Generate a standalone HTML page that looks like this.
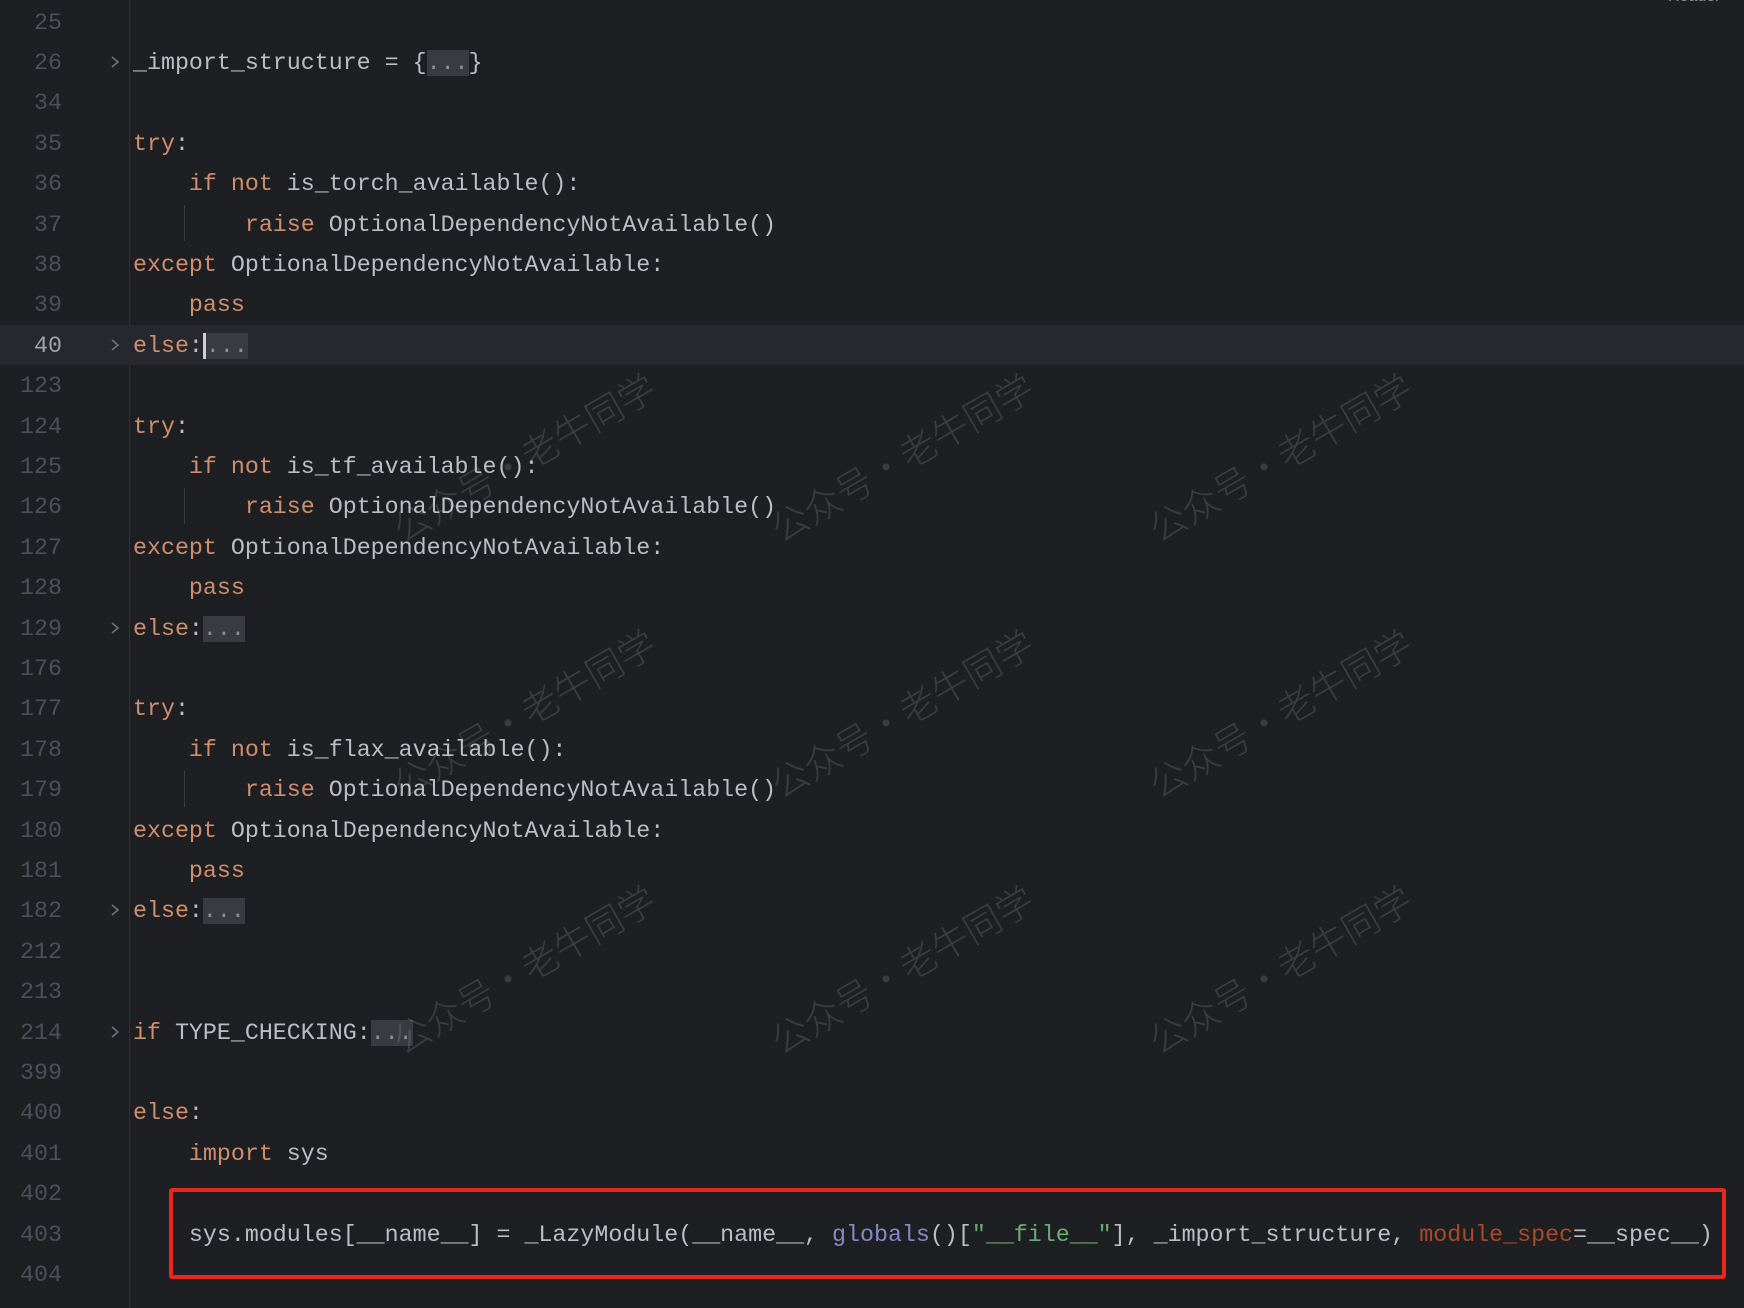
<!DOCTYPE html>
<html><head><meta charset="utf-8"><style>
html,body{margin:0;padding:0;background:#1e1f22;width:1744px;height:1308px;overflow:hidden;position:relative;font-family:"Liberation Mono",monospace;}
.row{position:absolute;left:0;width:1744px;height:40.4px;line-height:40.4px;font-size:23.3px;color:#bcbec4;white-space:pre;}
.num{position:absolute;left:0;width:62px;text-align:right;color:#4b5059;}
.code{position:absolute;left:133px;}
.k{color:#cf8e6d}
.fd{background:#393b40;color:#8c8f96}
.g{color:#8888c6}.s{color:#6aab73}.p{color:#aa4926}
.arrow{position:absolute;left:110px;top:12px;width:10px;height:14px}
.cur{background:#26282e}
.gut{position:absolute;left:129px;top:0;width:1px;height:1308px;background:#2e3034}
.ig{position:absolute;left:184px;width:1px;background:#3a3c41}
.wm{position:absolute;font-family:"Noto Sans CJK SC",sans-serif;font-size:37px;font-weight:300;color:rgba(255,255,255,0.13);transform:translate(-50%,-50%) rotate(-30deg);white-space:nowrap;}
.box{position:absolute;left:169px;top:1188px;width:1557px;height:91px;border:4px solid #e8281f;border-radius:3px;box-sizing:border-box;}
</style></head><body>
<div class="gut"></div>
<div class="row cur" style="top:325px"></div>
<div style="position:absolute;top:2.5px;left:0;">
<div class="row" style="top:0"><span class="num">25</span></div>
<div class="row" style="top:40.4px"><span class="num">26</span><svg class="arrow"><path d="M2 2 L8 7 L2 12" stroke="#6f737a" stroke-width="1.6" fill="none"/></svg><span class="code">_import_structure = {<span class="fd">...</span>}</span></div>
<div class="row" style="top:80.8px"><span class="num">34</span></div>
<div class="row" style="top:121.2px"><span class="num">35</span><span class="code"><span class="k">try</span>:</span></div>
<div class="row" style="top:161.6px"><span class="num">36</span><span class="code">    <span class="k">if not</span> is_torch_available():</span></div>
<div class="row" style="top:202px"><span class="num">37</span><span class="code">        <span class="k">raise</span> OptionalDependencyNotAvailable()</span></div>
<div class="row" style="top:242.4px"><span class="num">38</span><span class="code"><span class="k">except</span> OptionalDependencyNotAvailable:</span></div>
<div class="row" style="top:282.8px"><span class="num">39</span><span class="code">    <span class="k">pass</span></span></div>
<div class="row" style="top:323.2px"><span class="num" style="color:#a1a3ab">40</span><svg class="arrow"><path d="M2 2 L8 7 L2 12" stroke="#6f737a" stroke-width="1.6" fill="none"/></svg><span class="code"><span class="k">else</span>:<span class="fd" style="border-left:3px solid #ced0d6">...</span></span></div>
<div class="row" style="top:363.6px"><span class="num">123</span></div>
<div class="row" style="top:404px"><span class="num">124</span><span class="code"><span class="k">try</span>:</span></div>
<div class="row" style="top:444.4px"><span class="num">125</span><span class="code">    <span class="k">if not</span> is_tf_available():</span></div>
<div class="row" style="top:484.8px"><span class="num">126</span><span class="code">        <span class="k">raise</span> OptionalDependencyNotAvailable()</span></div>
<div class="row" style="top:525.2px"><span class="num">127</span><span class="code"><span class="k">except</span> OptionalDependencyNotAvailable:</span></div>
<div class="row" style="top:565.6px"><span class="num">128</span><span class="code">    <span class="k">pass</span></span></div>
<div class="row" style="top:606px"><span class="num">129</span><svg class="arrow"><path d="M2 2 L8 7 L2 12" stroke="#6f737a" stroke-width="1.6" fill="none"/></svg><span class="code"><span class="k">else</span>:<span class="fd">...</span></span></div>
<div class="row" style="top:646.4px"><span class="num">176</span></div>
<div class="row" style="top:686.8px"><span class="num">177</span><span class="code"><span class="k">try</span>:</span></div>
<div class="row" style="top:727.2px"><span class="num">178</span><span class="code">    <span class="k">if not</span> is_flax_available():</span></div>
<div class="row" style="top:767.6px"><span class="num">179</span><span class="code">        <span class="k">raise</span> OptionalDependencyNotAvailable()</span></div>
<div class="row" style="top:808px"><span class="num">180</span><span class="code"><span class="k">except</span> OptionalDependencyNotAvailable:</span></div>
<div class="row" style="top:848.4px"><span class="num">181</span><span class="code">    <span class="k">pass</span></span></div>
<div class="row" style="top:888.8px"><span class="num">182</span><svg class="arrow"><path d="M2 2 L8 7 L2 12" stroke="#6f737a" stroke-width="1.6" fill="none"/></svg><span class="code"><span class="k">else</span>:<span class="fd">...</span></span></div>
<div class="row" style="top:929.2px"><span class="num">212</span></div>
<div class="row" style="top:969.6px"><span class="num">213</span></div>
<div class="row" style="top:1010px"><span class="num">214</span><svg class="arrow"><path d="M2 2 L8 7 L2 12" stroke="#6f737a" stroke-width="1.6" fill="none"/></svg><span class="code"><span class="k">if</span> TYPE_CHECKING:<span class="fd">...</span></span></div>
<div class="row" style="top:1050.4px"><span class="num">399</span></div>
<div class="row" style="top:1090.8px"><span class="num">400</span><span class="code"><span class="k">else</span>:</span></div>
<div class="row" style="top:1131.2px"><span class="num">401</span><span class="code">    <span class="k">import</span> sys</span></div>
<div class="row" style="top:1171.6px"><span class="num">402</span></div>
<div class="row" style="top:1212px"><span class="num">403</span><span class="code">    sys.modules[__name__] = _LazyModule(__name__, <span class="g">globals</span>()[<span class="s">"__file__"</span>], _import_structure, <span class="p">module_spec</span>=__spec__)</span></div>
<div class="row" style="top:1252.4px"><span class="num">404</span></div>
</div>
<div class="ig" style="top:205px;height:36px"></div>
<div class="ig" style="top:488px;height:36px"></div>
<div class="ig" style="top:771px;height:36px"></div>
<div class="box"></div>
<div style="position:absolute;left:1668px;top:-12px;font-family:'Liberation Sans',sans-serif;font-size:16px;color:#8c8f96">Reader</div>
<div class="wm" style="left:523px;top:456px">公众号·老牛同学</div>
<div class="wm" style="left:901px;top:456px">公众号·老牛同学</div>
<div class="wm" style="left:1279px;top:456px">公众号·老牛同学</div>
<div class="wm" style="left:523px;top:712px">公众号·老牛同学</div>
<div class="wm" style="left:901px;top:712px">公众号·老牛同学</div>
<div class="wm" style="left:1279px;top:712px">公众号·老牛同学</div>
<div class="wm" style="left:523px;top:968px">公众号·老牛同学</div>
<div class="wm" style="left:901px;top:968px">公众号·老牛同学</div>
<div class="wm" style="left:1279px;top:968px">公众号·老牛同学</div>
</body></html>
